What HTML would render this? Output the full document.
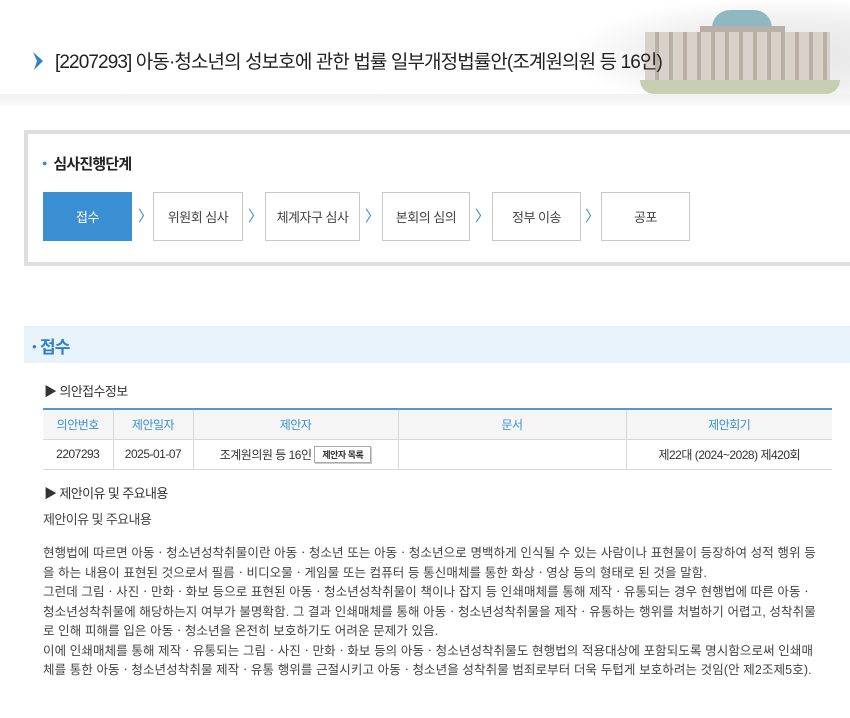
<!DOCTYPE html>
<html><head><meta charset="utf-8"><style>
*{margin:0;padding:0;box-sizing:border-box}
body{width:850px;height:718px;background:#fff;font-family:"Liberation Sans","Noto Sans CJK KR",sans-serif;color:#333;position:relative;overflow:hidden}
.a{position:absolute;white-space:nowrap}
.step{position:absolute;top:192px;height:49px;border:1px solid #c8c8c8;background:#fff;font-size:13px;color:#444;display:flex;align-items:center;justify-content:center;letter-spacing:-0.5px}
.arr{position:absolute;top:205px;color:#3a8fd2;font-size:15px}
table{position:absolute;left:43px;top:408px;width:789px;border-collapse:collapse;border-top:2px solid #4d9ad6;font-size:12px;letter-spacing:-0.5px}
td,th{border:1px solid #d8d8d8;text-align:center;height:30px;font-weight:normal}
th{background:#f5f5f5;color:#3a8fd2}
tr td:first-child,tr th:first-child{border-left:none}
tr td:last-child,tr th:last-child{border-right:none}
.p{position:absolute;left:43px;font-size:12.5px;color:#444;letter-spacing:0.1px;line-height:19.5px;white-space:nowrap}
</style></head><body>
<!-- building -->
<div class="a" style="left:580px;top:0;width:270px;height:100px;background:radial-gradient(ellipse at 75% 55%,#e4e4e4 0%,#f0f0f0 45%,#fff 75%)"></div>
<div class="a" style="left:712px;top:10px;width:60px;height:18px;border-radius:30px 30px 0 0;background:#8fb8c2"></div>
<div class="a" style="left:700px;top:26px;width:85px;height:6px;background:#b8b0a6"></div>
<div class="a" style="left:645px;top:32px;width:185px;height:50px;background:repeating-linear-gradient(90deg,#d8d2ca 0 10px,#b9b1a6 10px 14px)"></div>
<div class="a" style="left:640px;top:80px;width:200px;height:14px;background:#c7cfb2;border-radius:0 0 40px 40px"></div>
<div class="a" style="left:0;top:94px;width:850px;height:12px;background:linear-gradient(#f1f1f1,#fafafa)"></div>
<svg class="a" style="left:31px;top:50px" width="14" height="22" viewBox="0 0 14 22"><path d="M2 2 L12 11 L3 20 L6 11 Z" fill="#2f7fcf"/></svg>
<div class="a" style="left:55px;top:47px;font-size:19px;color:#222;letter-spacing:-0.9px">[2207293] 아동·청소년의 성보호에 관한 법률 일부개정법률안(조계원의원 등 16인)</div>

<div class="a" style="left:24px;top:130px;width:840px;height:136px;border:4px solid #dedede;border-right:none"></div>
<div class="a" style="left:42px;top:153px;font-size:15px;font-weight:bold;color:#222;letter-spacing:-0.8px"><span style="color:#3a8fd2;font-size:9px;vertical-align:3px">●</span>&nbsp; 심사진행단계</div>
<div class="step" style="left:43px;width:89px;background:#3a8fd2;border-color:#3a8fd2;color:#fff">접수</div>
<div class="arr" style="left:138px">〉</div>
<div class="step" style="left:153px;width:90px">위원회 심사</div>
<div class="arr" style="left:248px">〉</div>
<div class="step" style="left:265px;width:95px">체계자구 심사</div>
<div class="arr" style="left:365px">〉</div>
<div class="step" style="left:382px;width:88px">본회의 심의</div>
<div class="arr" style="left:475px">〉</div>
<div class="step" style="left:492px;width:89px">정부 이송</div>
<div class="arr" style="left:585px">〉</div>
<div class="step" style="left:601px;width:89px">공포</div>

<div class="a" style="left:24px;top:326px;width:826px;height:37px;background:#e8f2fb"></div>
<div class="a" style="left:32px;top:333px;font-size:17px;font-weight:bold;color:#2f7fcf;letter-spacing:-0.8px"><span style="font-size:8px;vertical-align:4px">●</span> 접수</div>
<div class="a" style="left:44px;top:381px;font-size:13px;color:#333;letter-spacing:-0.6px">▶ 의안접수정보</div>
<table>
<tr><th style="width:70px">의안번호</th><th style="width:80px">제안일자</th><th style="width:205px">제안자</th><th style="width:228px">문서</th><th>제안회기</th></tr>
<tr><td>2207293</td><td>2025-01-07</td><td>조계원의원 등 16인 <span style="display:inline-block;border:1px solid #aaa;font-size:9px;padding:1px 7px;font-weight:bold;box-shadow:1px 1px 0 #ccc;vertical-align:1px">제안자 목록</span></td><td></td><td>제22대 (2024~2028) 제420회</td></tr>
</table>
<div class="a" style="left:44px;top:483px;font-size:13px;color:#333;letter-spacing:-0.6px">▶ 제안이유 및 주요내용</div>
<div class="a" style="left:43px;top:509px;font-size:13px;color:#444;letter-spacing:-0.6px">제안이유 및 주요내용</div>
<div class="p" style="top:544px">현행법에 따르면 아동ㆍ청소년성착취물이란 아동ㆍ청소년 또는 아동ㆍ청소년으로 명백하게 인식될 수 있는 사람이나 표현물이 등장하여 성적 행위 등<br>을 하는 내용이 표현된 것으로서 필름ㆍ비디오물ㆍ게임물 또는 컴퓨터 등 통신매체를 통한 화상ㆍ영상 등의 형태로 된 것을 말함.<br>그런데 그림ㆍ사진ㆍ만화ㆍ화보 등으로 표현된 아동ㆍ청소년성착취물이 책이나 잡지 등 인쇄매체를 통해 제작ㆍ유통되는 경우 현행법에 따른 아동ㆍ<br>청소년성착취물에 해당하는지 여부가 불명확함. 그 결과 인쇄매체를 통해 아동ㆍ청소년성착취물을 제작ㆍ유통하는 행위를 처벌하기 어렵고, 성착취물<br>로 인해 피해를 입은 아동ㆍ청소년을 온전히 보호하기도 어려운 문제가 있음.<br>이에 인쇄매체를 통해 제작ㆍ유통되는 그림ㆍ사진ㆍ만화ㆍ화보 등의 아동ㆍ청소년성착취물도 현행법의 적용대상에 포함되도록 명시함으로써 인쇄매<br>체를 통한 아동ㆍ청소년성착취물 제작ㆍ유통 행위를 근절시키고 아동ㆍ청소년을 성착취물 범죄로부터 더욱 두텁게 보호하려는 것임(안 제2조제5호).</div>
</body></html>
